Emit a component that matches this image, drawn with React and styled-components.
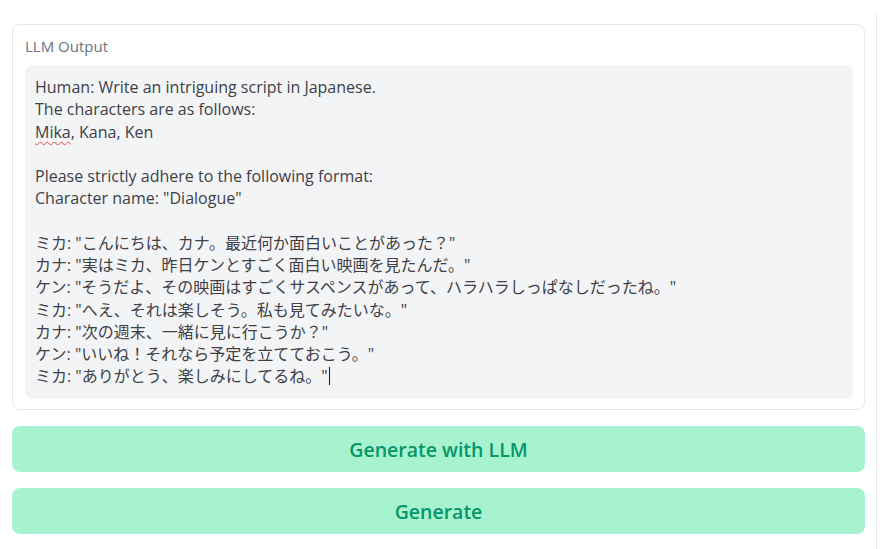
import React from "react";
import styled, { createGlobalStyle } from "styled-components";

const GlobalStyle = createGlobalStyle`
  body {
    margin: 0;
    background: #ffffff;
    font-family: "Open Sans", "Noto Sans CJK JP", sans-serif;
  }
`;

const Page = styled.div`
  padding-top: 14px;
  height: 535px;
  box-sizing: content-box;
`;

const Column = styled.div`
  width: 853px;
  height: 100%;
  padding: 10px 11px 0 12px;
  box-sizing: content-box;
  border-right: 1px solid #e5e7eb;
  display: flex;
  flex-direction: column;
  gap: 16px;
`;

const Card = styled.div`
  border: 1px solid #e5e7eb;
  border-radius: 8px;
  padding: 11px 11px 10px 12px;
  display: flex;
  flex-direction: column;
  gap: 9px;
`;

const Label = styled.div`
  font-size: 15px;
  line-height: 20px;
  color: #6b7280;
`;

const Output = styled.div`
  background: #f3f4f6;
  border-radius: 8px;
  padding: 11px 10px 10px 10px;
  min-height: 313px;
  font-size: 16px;
  line-height: 22.25px;
  color: #3f3f46;
  white-space: pre-wrap;
  font-family: "Open Sans", "Noto Sans CJK JP", sans-serif;
`;

const Misspelt = styled.span`
  text-decoration: underline wavy #ef4444;
  text-decoration-thickness: 1px;
  text-underline-offset: 3px;
`;

const Caret = styled.span`
  display: inline-block;
  width: 1px;
  height: 18px;
  background: #111827;
  vertical-align: -3px;
  margin-left: 1px;
`;

const Actions = styled.div`
  display: flex;
  flex-direction: column;
  gap: 16px;
`;

const Button = styled.button`
  height: 46px;
  width: 100%;
  border: none;
  border-radius: 8px;
  background: #a7f3d0;
  color: #059669;
  font-family: "Open Sans", sans-serif;
  font-size: 19.5px;
  font-weight: 600;
  cursor: pointer;
`;

export default function App() {
  return (
    <>
      <GlobalStyle />
      <Page>
        <Column>
          <Card>
            <Label>LLM Output</Label>
            <Output>
              {"Human: Write an intriguing script in Japanese.\nThe characters are as follows:\n"}
              <Misspelt>Mika</Misspelt>
              {", Kana, Ken\n\nPlease strictly adhere to the following format:\nCharacter name: \"Dialogue\"\n\n"}
              {"ミカ: \"こんにちは、カナ。最近何か面白いことがあった？\"\n"}
              {"カナ: \"実はミカ、昨日ケンとすごく面白い映画を見たんだ。\"\n"}
              {"ケン: \"そうだよ、その映画はすごくサスペンスがあって、ハラハラしっぱなしだったね。\"\n"}
              {"ミカ: \"へえ、それは楽しそう。私も見てみたいな。\"\n"}
              {"カナ: \"次の週末、一緒に見に行こうか？\"\n"}
              {"ケン: \"いいね！それなら予定を立てておこう。\"\n"}
              {"ミカ: \"ありがとう、楽しみにしてるね。\""}
              <Caret />
            </Output>
          </Card>
          <Actions>
            <Button>Generate with LLM</Button>
            <Button>Generate</Button>
          </Actions>
        </Column>
      </Page>
    </>
  );
}
